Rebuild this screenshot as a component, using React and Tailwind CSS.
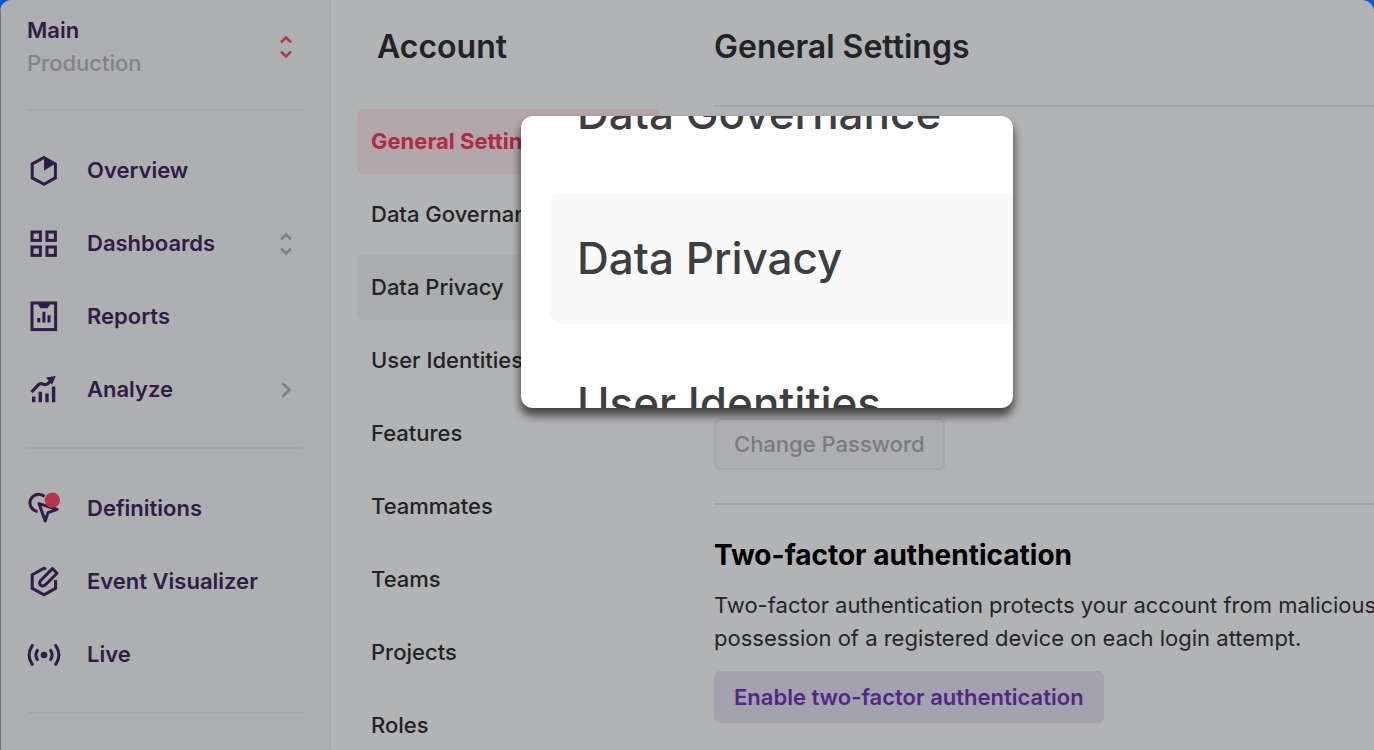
import React from 'react';

const iconProps = {
  viewBox: '0 0 34 34',
  fill: 'none',
  stroke: 'currentColor',
  strokeWidth: 3,
  className: 'h-[34px] w-[34px] shrink-0',
  'aria-hidden': true,
};

function OverviewIcon() {
  return (
    <svg {...iconProps}>
      <path d="M17 3.5 28.4 10v13.8L17 30.3 5.2 23.8V10z" />
      <path d="M17 3.3 28 9.8 17 16.8z" fill="currentColor" stroke="none" />
    </svg>
  );
}

function DashboardsIcon() {
  return (
    <svg {...iconProps}>
      <rect x="5" y="5" width="8.4" height="8.4" />
      <rect x="20" y="5" width="8.4" height="8.4" />
      <rect x="5" y="20" width="8.4" height="8.4" />
      <rect x="20" y="20" width="8.4" height="8.4" />
    </svg>
  );
}

function ReportsIcon() {
  return (
    <svg {...iconProps}>
      <rect x="5" y="3" width="23.6" height="26.6" />
      <path d="M11.5 3h11v2.6L20.5 8.2h-7l-2-2.6z" fill="currentColor" stroke="none" />
      <path d="M11.8 18v4.4M16.9 11.8v10.6M22 15.2v7.2" />
    </svg>
  );
}

function AnalyzeIcon() {
  return (
    <svg {...iconProps}>
      <path d="M4.5 19.2 11.3 11.8q2.2-2 4.8-.6t5-.8L26 6" strokeWidth="3.2" />
      <path d="M19 4.6 28.8 3l-3.8 8.8z" fill="currentColor" stroke="none" />
      <path d="M6.7 23.5v5.8M13.3 18.8v10.5M20 20.5v8.8M26.6 13.4v15.9" strokeWidth="3.4" />
    </svg>
  );
}

function DefinitionsIcon() {
  return (
    <svg {...iconProps}>
      <path d="M17.5 4.6A8.6 8.6 0 1 0 10.5 19.4" />
      <path d="M12 11.6 30.2 17.4 21 20.6 18.2 29z" strokeLinejoin="round" />
      <circle cx="25.3" cy="8.1" r="7.7" fill="#b5364b" stroke="none" />
    </svg>
  );
}

function VisualizerIcon() {
  return (
    <svg {...iconProps}>
      <path d="M19 4.2 17 3.1 5.2 9.8v13.6L17 29.9l11.6-6.5V15" />
      <path d="M25.4 3.6 30 8.2 18 20.2q-3 1.4-4.6 0t0-4.4z" strokeLinejoin="round" />
    </svg>
  );
}

function LiveIcon() {
  return (
    <svg {...iconProps} strokeLinecap="round">
      <circle cx="17" cy="17" r="3.3" fill="currentColor" stroke="none" />
      <path d="M10.4 12.4Q7.4 17 10.4 21.6M23.6 12.4Q26.6 17 23.6 21.6" />
      <path d="M5.2 7.6Q-1 17 5.2 26.4M28.8 7.6Q35 17 28.8 26.4" />
    </svg>
  );
}

function Sorter({ className }) {
  return (
    <svg viewBox="0 0 12 24" fill="none" stroke="currentColor" strokeWidth="2.6" className={'mr-[11px] h-6 w-3 ' + className} aria-hidden>
      <path d="M1 7.4 6 2.6l5 4.8M1 16.6l5 4.8 5-4.8" />
    </svg>
  );
}

function Arrow() {
  return (
    <svg viewBox="0 0 12 24" fill="none" stroke="currentColor" strokeWidth="2.6" className="mr-[11px] h-6 w-3 text-[#7e7f82]" aria-hidden>
      <path d="M2.4 5.2 9.4 12l-7 6.8" />
    </svg>
  );
}

const mainLinks = [
  { name: 'Overview', icon: <OverviewIcon /> },
  { name: 'Dashboards', icon: <DashboardsIcon />, end: <Sorter className="text-[#7e7f82]" /> },
  { name: 'Reports', icon: <ReportsIcon /> },
  { name: 'Analyze', icon: <AnalyzeIcon />, end: <Arrow /> },
];

const dataLinks = [
  { name: 'Definitions', icon: <DefinitionsIcon /> },
  { name: 'Event Visualizer', icon: <VisualizerIcon /> },
  { name: 'Live', icon: <LiveIcon /> },
];

const accountLinks = ['General Settings', 'Data Governance', 'Data Privacy', 'User Identities', 'Features', 'Teammates', 'Teams', 'Projects', 'Roles'];

const accountStyles = {
  'General Settings': 'bg-[#b3a6aa] font-bold text-[#b02a45]',
  'Data Privacy': 'bg-[#abacae] font-medium',
};

function SideNav({ links }) {
  return (
    <nav className="border-t-2 border-[#a6a7a9] pt-[23px] pb-[21px]">
      {links.map((link) => (
        <a key={link.name} href="#" className="flex h-[73px] items-center gap-[26px] font-semibold">
          {link.icon}
          <span className="flex-1">{link.name}</span>
          {link.end}
        </a>
      ))}
    </nav>
  );
}

function Sidebar() {
  return (
    <aside className="w-[331px] shrink-0 border-r-2 border-l border-r-[#a9aaac] border-l-[#737477] bg-[#aeafb1] pt-[14px] pr-[26px] pl-[26px] text-[22px] text-[#301c47]">
      <button className="mb-[29px] flex w-full items-center justify-between text-left leading-[33px]">
        <span>
          <span className="block font-semibold">Main</span>
          <span className="block font-medium text-[#828386]">Production</span>
        </span>
        <Sorter className="text-[#b5364b]" />
      </button>
      <SideNav links={mainLinks} />
      <SideNav links={dataLinks} />
      <hr className="border-t-2 border-[#a6a7a9]" />
    </aside>
  );
}

function AccountMenu() {
  return (
    <section className="w-[383px] shrink-0 pr-[54px] pl-[26px]">
      <h2 className="pt-[27px] pb-[42px] pl-5 text-[32px] leading-10 font-semibold">Account</h2>
      <ul className="flex flex-col gap-2 text-[22px]">
        {accountLinks.map((name) => (
          <li key={name}>
            <a href="#" className={'flex h-[65px] items-center rounded-md px-[14px] whitespace-nowrap ' + (accountStyles[name] || 'font-medium')}>{name}</a>
          </li>
        ))}
      </ul>
    </section>
  );
}

function Settings() {
  return (
    <main className="min-w-0 flex-1 overflow-hidden text-[22px]">
      <h1 className="border-b-2 border-[#a5a6a8] pt-[27px] pb-[38px] text-[32px] leading-10 font-semibold">General Settings</h1>
      <div className="border-b-2 border-[#a0a1a3] pt-[311px] pb-[33px]">
        <button disabled className="h-[52px] rounded-md border-2 border-[#a5a6a8] bg-[#aeafb1] px-[18px] font-medium text-[#7a7b7e]">Change Password</button>
      </div>
      <h3 className="pt-[32px] text-[28px] leading-9 font-bold text-black">Two-factor authentication</h3>
      <p className="pt-4 pb-4 leading-[33px] whitespace-nowrap text-[#242528]">
        Two-factor authentication protects your account from malicious
        <br />
        possession of a registered device on each login attempt.
      </p>
      <button className="h-[52px] rounded-md bg-[#a5a2b0] px-5 font-semibold text-[#522886]">Enable two-factor authentication</button>
    </main>
  );
}

// enlarged view of the hovered menu entry, floats over the page
function Magnifier() {
  return (
    <div className="absolute top-[116px] left-[521px] flex h-[292px] w-[492px] flex-col justify-center gap-[14px] overflow-hidden rounded-xl bg-white pb-2 pl-7 text-[44px] font-medium text-[#3d3e41] shadow-[0_7px_8px_1px_rgba(0,0,0,0.6)]">
      <div className="flex h-[131px] shrink-0 items-center pl-7">Data Governance</div>
      <div className="flex h-[131px] shrink-0 items-center rounded-l-xl bg-[#f9f9f9] pl-7">Data Privacy</div>
      <div className="flex h-[131px] shrink-0 items-center pl-7">User Identities</div>
    </div>
  );
}

function App() {
  return (
    <div className="h-screen overflow-hidden bg-[#085bc6] font-['Inter',sans-serif]">
      <div className="relative flex h-full overflow-hidden rounded-t-xl bg-[#b2b3b5] text-[#222326]">
        <Sidebar />
        <AccountMenu />
        <Settings />
        <Magnifier />
      </div>
    </div>
  );
}

export default App;
